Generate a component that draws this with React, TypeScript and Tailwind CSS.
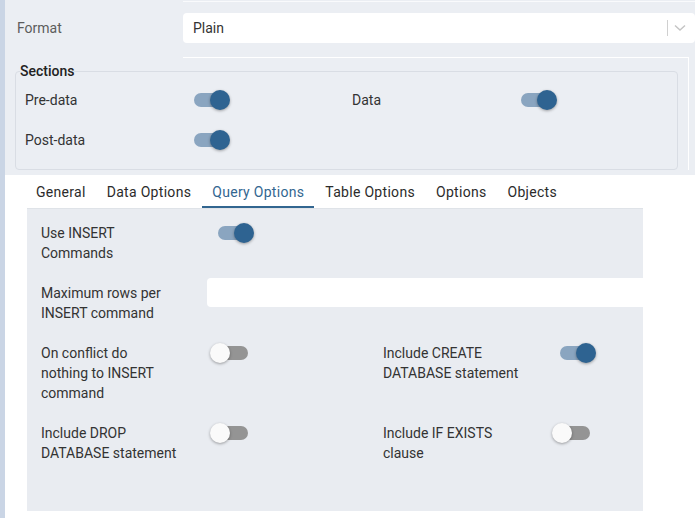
import { Fragment } from "react";

type SwitchProps = { on?: boolean; className?: string };

// MUI-like toggle: 14px track, 20px knob
const Switch = ({ on, className = "" }: SwitchProps) => (
  <span className={`relative inline-block h-[20px] w-[40px] shrink-0 ${className}`}>
    <span
      className={`absolute left-[4px] top-[3px] h-[14px] w-[34px] rounded-full ${
        on ? "bg-[#8aa5c0]" : "bg-[#949494]"
      }`}
    />
    <span
      className={`absolute top-0 h-[20px] w-[20px] rounded-full shadow-[0_1px_3px_rgba(0,0,0,0.35)] ${
        on ? "left-[20px] bg-[#2e6391]" : "left-0 bg-[#fafafa]"
      }`}
    />
  </span>
);

const tabs = ["General", "Data Options", "Query Options", "Table Options", "Options", "Objects"];

const App = () => {
  return (
    <Fragment>
      <div className="flex min-h-[518px] w-[695px] font-['Roboto',sans-serif] text-[14px] leading-[20px] text-[#333]">
        <div className="w-[5px] shrink-0 bg-[#cad5e5]" />
        <div className="flex-1 bg-white">
          {/* top form area */}
          <div className="bg-[#ebeef3] pb-[5px] pt-[1px]">
            <div className="ml-[178px] h-px bg-white/70" />
            <div className="mt-[11px] flex items-center">
              <div className="w-[178px] pl-[12px] text-[#5c5c5c]">Format</div>
              <div className="flex h-[30px] flex-1 items-center rounded-[4px] bg-white pl-[10px]">
                <span className="flex-1">Plain</span>
                <span className="h-[16px] w-px bg-[#d0d0d0]" />
                <svg width="12" height="8" viewBox="0 0 12 8" className="ml-[6px] mr-[9px]">
                  <polyline points="1,1.5 6,6 11,1.5" fill="none" stroke="#c4c4c4" strokeWidth="1.4" />
                </svg>
              </div>
            </div>
            <div className="ml-[178px] mr-[6px] mt-[14px] h-px bg-white" />
            <div className="mr-[6px] border-r border-white pt-[4px]">
              <fieldset className="ml-[10px] mr-[10px] rounded-[4px] border border-[#d9dde4] pb-[9px] pl-[4px]">
                <legend className="text-[14px] font-medium leading-[18px] text-[#222]">Sections</legend>
                <div className="flex h-[40px] items-center pl-[5px]">
                  <div className="flex w-[327px] items-center">
                    <span className="w-[165px]">Pre-data</span>
                    <Switch on />
                  </div>
                  <div className="flex items-center">
                    <span className="w-[165px]">Data</span>
                    <Switch on />
                  </div>
                </div>
                <div className="flex h-[40px] items-center pl-[5px]">
                  <span className="w-[165px]">Post-data</span>
                  <Switch on />
                </div>
              </fieldset>
            </div>
          </div>

          {/* tabs */}
          <div className="ml-[22px] w-[616px]">
            <div className="box-border flex h-[34px] gap-[1px] border-b border-[#dfe3e8]">
              {tabs.map((t, i) => (
                <div
                  key={t}
                  className={`flex h-full items-center border-b-2 px-[10px] pt-[2px] tracking-[0.3px] ${
                    i === 0 ? "-ml-px" : ""
                  } ${
                    t === "Query Options" ? "border-[#326690] text-[#326690]" : "border-transparent text-[#2b2b2b]"
                  }`}
                >
                  {t}
                </div>
              ))}
            </div>

            <div className="flex h-[302px] flex-col gap-[20px] bg-[#e9ecf1] pl-[14px] pt-[14px]">
              <div className="flex">
                <span className="w-[173px]">
                  Use INSERT
                  <br />
                  Commands
                </span>
                <Switch on />
              </div>

              <div className="flex">
                <span className="w-[166px]">
                  Maximum rows per
                  <br />
                  INSERT command
                </span>
                <input type="text" className="-mt-[5px] h-[29px] flex-1 rounded-l-[4px] bg-white outline-none" />
              </div>

              <div className="flex">
                <div className="flex w-[342px]">
                  <span className="w-[169px]">
                    On conflict do
                    <br />
                    nothing to INSERT
                    <br />
                    command
                  </span>
                  <Switch />
                </div>
                <div className="flex">
                  <span className="w-[173px]">
                    Include CREATE
                    <br />
                    DATABASE statement
                  </span>
                  <Switch on />
                </div>
              </div>

              <div className="flex">
                <div className="flex w-[342px]">
                  <span className="w-[169px]">
                    Include DROP
                    <br />
                    DATABASE statement
                  </span>
                  <Switch />
                </div>
                <div className="flex">
                  <span className="w-[169px]">
                    Include IF EXISTS
                    <br />
                    clause
                  </span>
                  <Switch />
                </div>
              </div>
            </div>
          </div>
        </div>
      </div>
    </Fragment>
  );
};

export default App;
